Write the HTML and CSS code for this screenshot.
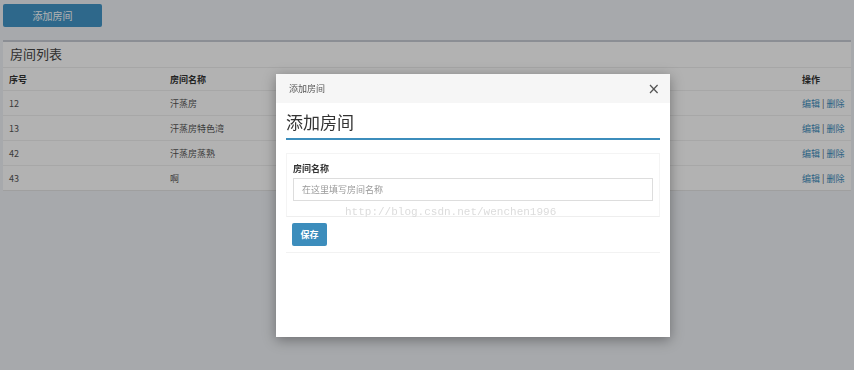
FILE: index.html
```html
<!DOCTYPE html>
<html lang="zh-CN">
<head>
  <meta charset="UTF-8" />
  <title>房间列表</title>
  <link rel="stylesheet" href="styles.css">
</head>
<body>

<button class="btn-add">添加房间</button>

<!-- Room list -->
<div class="box">
  <div class="box-header">房间列表</div>
  <table class="room-table">
    <thead>
      <tr>
        <th class="col-id">序号</th>
        <th class="col-name">房间名称</th>
        <th class="col-fill"></th>
        <th class="col-op">操作</th>
      </tr>
    </thead>
    <tbody>
      <tr><td>12</td><td>汗蒸房</td><td></td><td><a href="#">编辑</a> | <a href="#">删除</a></td></tr>
      <tr><td>13</td><td>汗蒸房特色湾</td><td></td><td><a href="#">编辑</a> | <a href="#">删除</a></td></tr>
      <tr><td>42</td><td>汗蒸房蒸熟</td><td></td><td><a href="#">编辑</a> | <a href="#">删除</a></td></tr>
      <tr><td>43</td><td>啊</td><td></td><td><a href="#">编辑</a> | <a href="#">删除</a></td></tr>
    </tbody>
  </table>
</div>

<div class="backdrop"></div>

<!-- Add room modal -->
<div class="modal">
  <div class="modal-header">
    <span class="modal-title">添加房间</span>
    <span class="modal-close">&times;</span>
  </div>
  <div class="modal-body">
    <h3 class="form-title">添加房间</h3>
    <div class="form-box">
      <label class="form-label">房间名称</label>
      <input class="form-input" type="text" placeholder="在这里填写房间名称">
    </div>
    <div class="form-footer">
      <button class="btn-save">保存</button>
    </div>
  </div>
</div>

<div class="watermark">http://blog.csdn.net/wenchen1996</div>

</body>
</html>
```

FILE: styles.css
```css
/* Global */
body {
  margin: 0;
  padding: 4px 3px;
  background: #eff2f6;
  font-family: "Noto Sans CJK SC", "Noto Sans", sans-serif;
  font-size: 10px;
  color: #333;
}

.btn-add {
  display: block;
  width: 99px;
  height: 23px;
  border: none;
  border-radius: 2px;
  background: #4296c8;
  color: #fff;
  font-family: inherit;
  font-size: 10px;
}

/* Room list box */
.box {
  margin-top: 13px;
  background: #fff;
  border-top: 2px solid #c8ccd4;
  border-bottom: 1px solid #e4e4e4;
}

.box-header {
  height: 25px;
  line-height: 24px;
  padding: 0 7px;
  font-size: 13px;
  color: #444;
  border-bottom: 1px solid #eee;
}

.room-table {
  width: 100%;
  border-collapse: collapse;
}

.room-table th,
.room-table td {
  text-align: left;
  padding: 0 6px;
  height: 24px;
  border-top: 1px solid #f0f0f0;
  font-size: 9px;
  white-space: nowrap;
}

.room-table th {
  height: 22px;
  border-top: none;
  font-weight: bold;
  color: #333;
}

.room-table td {
  color: #555;
}

.col-id { width: 149px; }
.col-name { width: 200px; }
.col-op { width: 44px; }

.room-table tr > :last-child {
  padding-right: 5px;
}

.room-table a {
  color: #3c8dbc;
  text-decoration: none;
}

/* Overlay */
.backdrop {
  position: fixed;
  inset: 0;
  background: rgba(0, 0, 0, 0.3);
}

.modal {
  position: absolute;
  left: 276px;
  top: 74px;
  width: 394px;
  height: 263px;
  background: #fff;
  box-shadow: 0 3px 12px rgba(0, 0, 0, 0.35);
}

.modal-header {
  display: flex;
  justify-content: space-between;
  align-items: center;
  height: 29px;
  padding: 0 10px 0 13px;
  background: #f6f6f6;
}

.modal-title {
  font-size: 9px;
  color: #555;
}

.modal-close {
  font-family: "DejaVu Sans", sans-serif;
  font-size: 15px;
  color: #555;
}

.modal-body {
  padding: 0 10px;
}

.form-title {
  margin: 0;
  padding-top: 6px;
  height: 29px;
  font-size: 17px;
  font-weight: normal;
  color: #333;
  border-bottom: 2px solid #3c8dbc;
}

.form-box {
  margin-top: 13px;
  padding: 8px 6px 15px;
  border: 1px solid #f4f4f4;
  border-bottom-color: #eee;
}

.form-label {
  display: block;
  font-weight: bold;
  font-size: 9px;
  color: #333;
  margin-bottom: 3px;
}

.form-input {
  display: block;
  box-sizing: border-box;
  width: 100%;
  height: 23px;
  padding: 0 8px;
  border: 1px solid #ddd;
  font-family: inherit;
  font-size: 9px;
}

.form-input::placeholder {
  color: #999;
}

.form-footer {
  padding: 6px 6px 6px;
  border-bottom: 1px solid #f2f2f2;
}

.btn-save {
  width: 35px;
  height: 23px;
  border: none;
  border-radius: 2px;
  background: #3c8dbc;
  color: #fff;
  font-family: inherit;
  font-size: 9px;
  font-weight: bold;
}

.watermark {
  position: absolute;
  left: 345px;
  top: 206px;
  font-family: "Liberation Mono", monospace;
  font-size: 11px;
  color: #dcdcdc;
  white-space: nowrap;
}
```
